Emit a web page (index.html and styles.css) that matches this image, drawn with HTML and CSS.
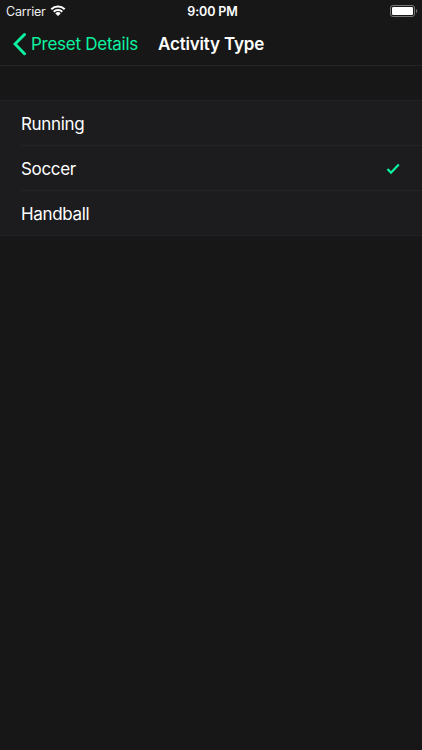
FILE: index.html
```html
<!DOCTYPE html>
<html lang="en">
<head>
    <meta charset="UTF-8">
    <meta name="viewport" content="width=device-width, initial-scale=1.0">
    <title>Activity Type</title>
    <link rel="stylesheet" href="styles.css">
</head>
<body>
    <header class="header">
        <div class="status-bar">
            <div class="carrier">
                <span>Carrier</span>
                <svg class="wifi" viewBox="0 0 16 12" width="16" height="12">
                    <path d="M1.300 4.300a9.600 9.600 0 0 1 13.400 0M3.700 6.800a6.200 6.200 0 0 1 8.600 0" fill="none" stroke="#fff" stroke-width="2"/>
                    <path d="M8 11L5.300 8.400a3.900 3.900 0 0 1 5.400 0z" fill="#fff"/>
                </svg>
            </div>
            <div class="time">9:00 PM</div>
            <div class="battery">
                <svg viewBox="0 0 28 12" width="28" height="12">
                    <rect x="0.500" y="0.500" width="24" height="11" rx="2.500" fill="none" stroke="#777"/>
                    <rect x="2" y="2" width="21" height="8" rx="1.300" fill="#fff"/>
                    <path d="M26 4v4c1.600-.7 1.600-3.300 0-4z" fill="#777"/>
                </svg>
            </div>
        </div>
        <nav class="nav-bar">
            <a class="back">
                <svg viewBox="0 0 14 24" width="14" height="24">
                    <path d="M11.500 2.500L2 12l9.500 9.700" fill="none" stroke="#0df2a0" stroke-width="3" stroke-linecap="round"/>
                </svg>
                <span>Preset Details</span>
            </a>
            <h1 class="title">Activity Type</h1>
        </nav>
    </header>
    <ul class="options">
        <li class="option"><span>Running</span></li>
        <li class="option selected">
            <span>Soccer</span>
            <svg class="check" viewBox="0 0 14 12" width="14" height="12">
                <path d="M1.500 6l3.500 3.700L12.800 1.500" fill="none" stroke="#0df2a0" stroke-width="2.200"/>
            </svg>
        </li>
        <li class="option"><span>Handball</span></li>
    </ul>
</body>
</html>
```
FILE: styles.css
```css
* {
    box-sizing: border-box;
}

body {
    margin: 0;
    height: 750px;
    background-color: #171717;
    color: #fff;
    font-family: Inter, sans-serif;
    overflow: hidden;
}

.header {
    height: 66px;
    border-bottom: 1px solid #242424;
}

.status-bar {
    display: grid;
    grid-template-columns: 1fr auto 1fr;
    align-items: center;
    height: 22px;
    padding: 0 4px 0 6px;
    font-size: 12.5px;
}

.carrier {
    display: flex;
    align-items: center;
    gap: 4px;
    color: #eee;
    letter-spacing: -0.2px;
}

.wifi {
    margin-bottom: 1px;
}

.time {
    padding-left: 1px;
    font-weight: 600;
    letter-spacing: -0.1px;
}

.battery {
    display: flex;
    justify-content: flex-end;
    margin-bottom: 1px;
}

.nav-bar {
    display: flex;
    align-items: center;
    height: 43px;
    padding-left: 13px;
    font-size: 17px;
}

.back {
    display: flex;
    align-items: center;
    gap: 4px;
    width: 145px;
    color: #0df2a0;
    letter-spacing: -0.26px;
    white-space: nowrap;
}

.title {
    margin: 0;
    font-size: 17px;
    font-weight: 600;
    letter-spacing: -0.17px;
}

.options {
    list-style: none;
    margin: 34px 0 0;
    padding: 0;
    background-color: #1c1c1e;
    border-top: 1px solid #222224;
    border-bottom: 1px solid #222224;
}

.option {
    display: flex;
    align-items: center;
    justify-content: space-between;
    height: 45px;
    margin-left: 21px;
    padding: 1px 22px 0 0;
    font-size: 17px;
    letter-spacing: -0.34px;
}

.option:first-child {
    height: 44px;
    padding-top: 2px;
}

.option + .option {
    border-top: 1px solid #242426;
}
```
